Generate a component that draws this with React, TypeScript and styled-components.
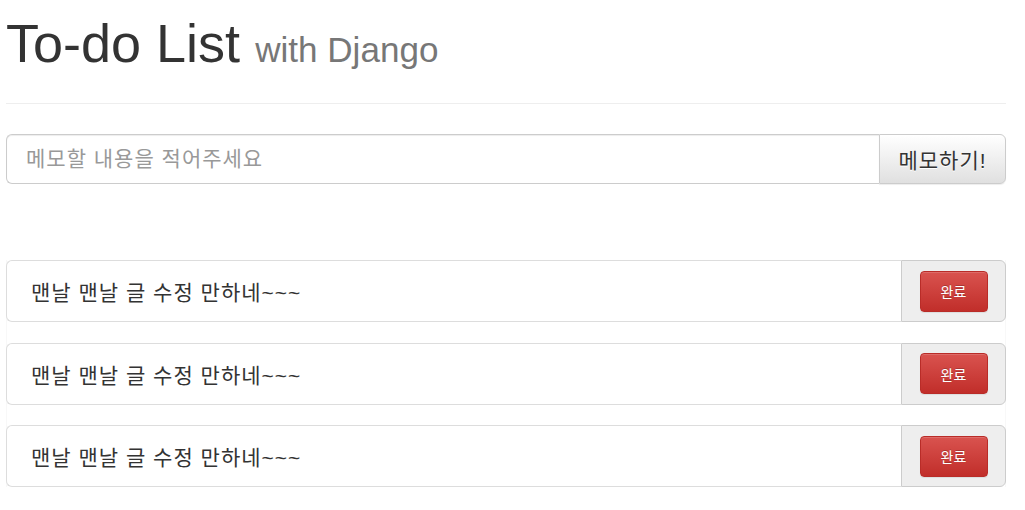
import React from "react";
import styled, { createGlobalStyle } from "styled-components";

const GlobalStyle = createGlobalStyle`
  * {
    box-sizing: border-box;
  }
  body {
    margin: 0;
    background: #fff;
    color: #333;
    font-family: "Liberation Sans", "Noto Sans CJK KR", Arial, sans-serif;
  }
`;

const Page = styled.main`
  width: 1000px;
  margin-left: 6px;
  display: flex;
  flex-direction: column;
`;

const Title = styled.h1`
  margin: 14px 0 0 0;
  font-size: 54px;
  font-weight: 400;
  line-height: 1.1;
  color: #333;
`;

const Sub = styled.small`
  font-size: 65%;
  color: #777;
`;

const Rule = styled.hr`
  margin: 30px 0 30px;
  border: 0;
  border-top: 1px solid #eee;
`;

const InputGroup = styled.form`
  display: flex;
  height: 50px;
`;

const TextInput = styled.input`
  flex: 1;
  min-width: 0;
  height: 100%;
  padding: 0 19px;
  font-size: 21px;
  letter-spacing: 1px;
  font-family: "Liberation Sans", "Noto Sans CJK KR", sans-serif;
  color: #555;
  border: 1px solid #ccc;
  border-right: 0;
  border-radius: 6px 0 0 6px;
  box-shadow: inset 0 1px 1px rgba(0, 0, 0, 0.075);
  outline: none;

  &::placeholder {
    color: #999;
  }
`;

const MemoButton = styled.button`
  width: 127px;
  height: 100%;
  font-size: 21px;
  letter-spacing: 1px;
  font-family: "Liberation Sans", "Noto Sans CJK KR", sans-serif;
  color: #333;
  background: linear-gradient(to bottom, #fff 0%, #e0e0e0 100%);
  border: 1px solid #ccc;
  border-radius: 0 6px 6px 0;
  box-shadow: inset 0 1px 0 rgba(255, 255, 255, 0.15), 0 1px 1px rgba(0, 0, 0, 0.075);
  text-shadow: 0 1px 0 #fff;
  padding: 0;
`;

const List = styled.ul`
  list-style: none;
  margin: 76px 0 0;
  padding: 0;
  display: flex;
  flex-direction: column;
  gap: 20.5px;
  border-left: 1px solid #f8f8f8;
  border-right: 1px solid #f8f8f8;
`;

const Row = styled.li`
  display: flex;
  height: 62px;
  margin: 0 -1px;
`;

const ItemText = styled.div`
  flex: 1;
  display: flex;
  align-items: center;
  padding-left: 24px;
  font-size: 21px;
  letter-spacing: 1px;
  font-family: "Liberation Sans", "Noto Sans CJK KR", sans-serif;
  color: #333;
  border: 1px solid #ddd;
  border-right: 0;
  border-radius: 6px 0 0 6px;
`;

const Addon = styled.div`
  width: 105px;
  display: flex;
  align-items: center;
  justify-content: center;
  background: #eee;
  border: 1px solid #ccc;
  border-radius: 0 6px 6px 0;
`;

const DoneButton = styled.button`
  width: 68px;
  height: 41px;
  font-size: 14px;
  font-family: "Liberation Sans", "Noto Sans CJK KR", sans-serif;
  color: #fff;
  background: linear-gradient(to bottom, #d9534f 0%, #c12e2a 100%);
  border: 1px solid #b92c28;
  border-radius: 4px;
  text-shadow: 0 -1px 0 rgba(0, 0, 0, 0.2);
  box-shadow: inset 0 1px 0 rgba(255, 255, 255, 0.15), 0 1px 1px rgba(0, 0, 0, 0.075);
  padding: 0;
`;

const todos = ["맨날 맨날 글 수정 만하네~~~", "맨날 맨날 글 수정 만하네~~~", "맨날 맨날 글 수정 만하네~~~"];

export default function App() {
  return (
    <>
      <GlobalStyle />
      <Page>
        <Title>
          To-do List <Sub>with Django</Sub>
        </Title>
        <Rule />
        <InputGroup onSubmit={(e) => e.preventDefault()}>
          <TextInput placeholder="메모할 내용을 적어주세요" />
          <MemoButton type="submit">메모하기!</MemoButton>
        </InputGroup>
        <List>
          {todos.map((t, i) => (
            <Row key={i}>
              <ItemText>{t}</ItemText>
              <Addon>
                <DoneButton>완료</DoneButton>
              </Addon>
            </Row>
          ))}
        </List>
      </Page>
    </>
  );
}
